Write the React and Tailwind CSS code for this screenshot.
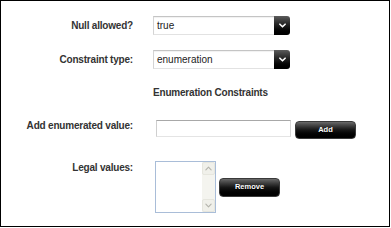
import React from "react";

function Chevron({ up = false, color = "#fff", w = 8, h = 5, sw = 1.6 }) {
  return (
    <svg width={w} height={h} viewBox="0 0 8 5" fill="none">
      <path
        d={up ? "M1 4 L4 1 L7 4" : "M1 1 L4 4 L7 1"}
        stroke={color}
        strokeWidth={sw}
        strokeLinecap="round"
        strokeLinejoin="round"
      />
    </svg>
  );
}

function Select({ value }) {
  return (
    <div className="ml-[20px] flex h-[19px] w-[137px]">
      <div className="flex flex-1 items-center border-y border-l border-t-[#c4c4c4] border-b-[#e2e2e2] border-l-[#d4d4d4] bg-white pl-[3px] text-[10px] text-[#222] shadow-[inset_0_1px_1px_rgba(0,0,0,0.06)]">
        {value}
      </div>
      <div className="flex w-[16px] items-center justify-center rounded-r-[3px] bg-linear-to-b from-[#5c5c5c] via-[#1e1e1e] to-[#000]">
        <Chevron w={7} h={5} sw={1.8} />
      </div>
    </div>
  );
}

function Button({ children, className = "" }) {
  return (
    <div
      className={`flex items-center justify-center rounded-[4px] border border-[#3a3a3a] bg-linear-to-b from-[#6a6a6a] via-[#161616] to-[#000] text-[7.5px] font-bold text-white [text-shadow:0_1px_1px_#000] ${className}`}
    >
      {children}
    </div>
  );
}

const label =
  "w-[132px] shrink-0 text-right text-[10px] leading-[12px] font-bold tracking-[-0.2px] text-[#333]";

export default function App() {
  return (
    <div className="h-[227px] w-[390px] border border-black bg-white font-['Liberation_Sans',Arial,sans-serif]">
      <div className="mt-[15px] flex h-[19px] items-center">
        <div className={label}>Null allowed?</div>
        <Select value="true" />
      </div>
      <div className="mt-[15px] flex h-[19px] items-center">
        <div className={label}>Constraint type:</div>
        <Select value="enumeration" />
      </div>
      <div className="mt-[18px] pl-[152px] text-[10px] leading-[12px] font-bold tracking-[-0.2px] text-[#333]">
        Enumeration Constraints
      </div>
      <div className="mt-[21px] flex items-start">
        <div className={label}>Add enumerated value:</div>
        <div className="ml-[23px] h-[17px] w-[135px] border border-t-[#a8a8a8] border-r-[#d6d6d6] border-b-[#e4e4e4] border-l-[#cfcfcf] bg-white"></div>
        <Button className="ml-[4px] mt-[1px] h-[18px] w-[61px]">Add</Button>
      </div>
      <div className="mt-[22px] flex items-center">
        <div className={`${label} self-start mt-[1px]`}>Legal values:</div>
        <div className="ml-[22px] flex h-[52px] w-[61px] border border-[#a9bdd8] bg-white">
          <div className="flex-1"></div>
          <div className="flex w-[13px] flex-col bg-[#f4f4ef]">
            <div className="flex h-[13px] items-center justify-center rounded-[2px] border border-[#e6e6de] bg-[#f0f0ea]">
              <Chevron up color="#b4b4ac" w={7} h={5} sw={1.3} />
            </div>
            <div className="flex-1"></div>
            <div className="flex h-[13px] items-center justify-center rounded-[2px] border border-[#e6e6de] bg-[#f0f0ea]">
              <Chevron color="#b4b4ac" w={7} h={5} sw={1.3} />
            </div>
          </div>
        </div>
        <Button className="ml-[3px] h-[19px] w-[61px]">Remove</Button>
      </div>
    </div>
  );
}
